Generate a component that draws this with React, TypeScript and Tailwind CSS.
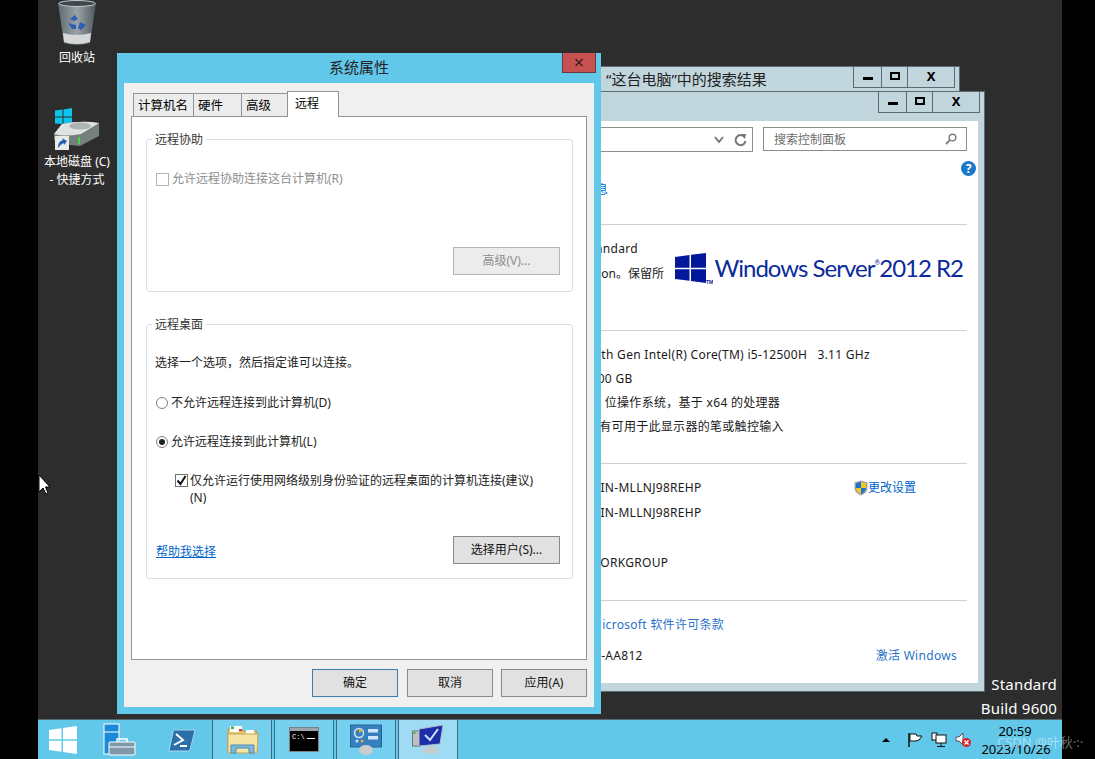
import React from "react";

const font = "font-['Noto_Sans','Noto_Sans_CJK_SC',sans-serif]";

const TabItem = ({ label, active, w }: { label: string; active?: boolean; w: string }) => (
  <div
    className={
      active
        ? `${w} h-[26px] -mb-[1px] z-10 bg-white border border-b-0 border-[#8f9499] pl-[7px] pt-[3px] text-[12px] leading-[18px]`
        : `${w} h-[23px] bg-[#ececec] border border-b-0 border-[#8f9499] -mr-[1px] pl-[4px] pt-[3px] text-[12.500px] leading-[18px]`
    }
  >
    {label}
  </div>
);

const DlgButton = ({ label, w, primary, disabled }: { label: string; w: string; primary?: boolean; disabled?: boolean }) => (
  <div
    className={`${w} h-[28px] flex items-center justify-center text-[12px] border ${
      primary ? "border-[#3c7fb1]" : "border-[#8a8a8a]"
    } ${disabled ? "bg-[#ececec] border-[#b5b5b5] text-[#8d8d8d]" : "bg-[#e1e1e1] text-[#111]"}`}
  >
    {label}
  </div>
);

const Group = ({ title, h, children }: { title: string; h: string; children?: React.ReactNode }) => (
  <div className={`relative ${h} w-[427px] border border-[#d5dfe5] rounded-[3px]`}>
    <span className="absolute left-[5px] -top-[8px] bg-white px-[3px] text-[12px] leading-[16px] text-[#333]">{title}</span>
    {children}
  </div>
);

const Caption = () => (
  <div className="flex h-[21px] border border-t-0 border-[#5c6a72] text-black">
    <div className="w-[28px] flex items-center justify-center border-r border-[#5c6a72]">
      <div className="w-[10px] h-[3px] bg-black mt-[3px]" />
    </div>
    <div className="w-[26px] flex items-center justify-center border-r border-[#5c6a72]">
      <div className="w-[10px] h-[8px] border-2 border-black -mt-[2px]" />
    </div>
    <div className="w-[46px] flex items-center justify-center text-[13px] font-bold leading-none -mt-[1px]">X</div>
  </div>
);

const RecycleBin = () => (
  <svg width="40" height="46" viewBox="0 0 40 46">
    <defs>
      <linearGradient id="bin" x1="0" x2="1">
        <stop offset="0" stopColor="#5f6a70" />
        <stop offset="0.5" stopColor="#9aa4a8" />
        <stop offset="1" stopColor="#4f585c" />
      </linearGradient>
    </defs>
    <path d="M1 3 L39 3 L33 43 Q20 46 7 43 Z" fill="url(#bin)" />
    <ellipse cx="20" cy="3.5" rx="18.5" ry="3" fill="#3f474b" stroke="#c3cace" />
    <path d="M6 33 Q20 37 34 33 L33 42 Q20 46 7 42 Z" fill="#d5d8d9" />
    <path d="M13 19 L18 15 L21 19 L17 21 Z M23 22 L29 25 L24 30 L21 28 Z M11 23 L15 29 L19 29 L19 25 Z" fill="#2d5fb5" />
  </svg>
);

const DriveIcon = () => (
  <svg width="48" height="44" viewBox="0 0 48 44">
    <path d="M2 2.500 L9.500 1.500 V8.500 H2 Z M10.500 1.500 L19 0 V8.500 H10.500 Z M2 9.500 H9.500 V16 L2 15.500 Z M10.500 9.500 H19 V16.500 L10.500 16 Z" fill="#0ec4ee" />
    <path d="M1 26 L9 16 Q28 12 46 15 V28 L27 38 Q10 37 1 32 Z" fill="#74807e" />
    <path d="M1 26 L9 16 Q28 12 46 15 L28 26 Q10 29 1 26 Z" fill="#dfe3e1" />
    <ellipse cx="27" cy="18" rx="11" ry="3.500" fill="#aeb4b2" />
    <rect x="25" y="29" width="2" height="7" fill="#45d44a" />
    <rect x="2" y="28" width="14" height="14" fill="#e9e9e9" />
    <path d="M5 40 Q5 33 10 32 L9 30 L14 33 L11 37 L10.500 35 Q8 36 5 40 Z" fill="#1f5fb0" />
  </svg>
);

const StartLogo = () => (
  <svg width="28" height="28" viewBox="0 0 28 28">
    <path d="M0 4 L12.500 2.200 V13.300 H0 Z M14 2 L28 0 V13.300 H14 Z M0 14.700 H12.500 V25.800 L0 24 Z M14 14.700 H28 V28 L14 26 Z" fill="#fff" />
  </svg>
);

const ServerManagerIcon = () => (
  <svg width="33" height="33" viewBox="0 0 33 33">
    <rect x="1" y="1" width="15" height="30" fill="#1a8ad8" stroke="#fff" />
    <line x1="1" y1="9" x2="16" y2="9" stroke="#fff" />
    <rect x="6" y="19" width="26" height="13" rx="1" fill="#7e98aa" stroke="#fff" />
    <path d="M14 19 V16 H24 V19" fill="none" stroke="#fff" strokeWidth="1.500" />
    <line x1="6" y1="24" x2="32" y2="24" stroke="#fff" />
  </svg>
);

const PowerShellIcon = () => (
  <svg width="28" height="23" viewBox="0 0 28 23">
    <path d="M6 1 H27 L22 21 Q22 22 20 22 H1 L5 3 Q5 1 6 1 Z" fill="#2a6fa8" stroke="#a9d3ea" />
    <path d="M8 5 L15 11 L6 16" fill="none" stroke="#fff" strokeWidth="2" />
    <rect x="12" y="16" width="7" height="2" fill="#fff" />
  </svg>
);

const FolderIcon = () => (
  <svg width="32" height="30" viewBox="0 0 32 30">
    <path d="M1 4 H11 L13 6 H30 V27 H1 Z" fill="#e6c66f" stroke="#b89a4a" />
    <rect x="3" y="1" width="12" height="6" fill="#fff" />
    <rect x="4" y="1.500" width="3" height="2.500" fill="#35b24a" />
    <rect x="12" y="4" width="3" height="2.500" fill="#d8402f" />
    <rect x="19" y="5" width="8" height="4" fill="#fff" />
    <path d="M1 9 H31 L30 28 H1 Z" fill="#f6e4a5" stroke="#c3a552" />
    <path d="M4 28 V20 H27 V28 H22 V23 H9 V28 Z" fill="#7fb8d8" stroke="#4c8cb4" />
  </svg>
);

const CmdIcon = () => (
  <svg width="30" height="25" viewBox="0 0 30 25">
    <rect x="0.500" y="0.500" width="29" height="24" fill="#000" stroke="#7a8288" />
    <rect x="1" y="1" width="28" height="3" fill="#9ea4a8" />
    <text x="3" y="12" fill="#fff" fontSize="7" fontFamily="'Liberation Mono', monospace">C:\</text>
    <rect x="18" y="11" width="8" height="1" fill="#fff" />
  </svg>
);

const ControlPanelIcon = () => (
  <svg width="33" height="32" viewBox="0 0 33 32">
    <rect x="0.500" y="1" width="31" height="22" fill="#3680c0" stroke="#26639b" />
    <circle cx="9" cy="9" r="4.500" fill="none" stroke="#cde7f6" strokeWidth="1.500" />
    <path d="M9 4.500 L13 7 L9 9 Z" fill="#f6a623" />
    <rect x="18" y="5" width="10" height="3.500" fill="#cde7f6" />
    <rect x="18" y="12" width="10" height="3.500" fill="#cde7f6" />
    <circle cx="7" cy="17" r="1.500" fill="#cde7f6" />
    <circle cx="12" cy="17" r="1.500" fill="#f6a623" />
    <ellipse cx="16" cy="26" rx="7" ry="5" fill="#c8cccd" />
  </svg>
);

const SystemIcon = () => (
  <svg width="33" height="29" viewBox="0 0 33 29">
    <rect x="0.500" y="6" width="8" height="15" fill="#bcc0c2" stroke="#6d7376" />
    <rect x="1.500" y="7" width="2" height="2" fill="#4caf50" />
    <path d="M7 4 L31 0 L28 19 L7 21 Z" fill="#1a2fa8" stroke="#b7bcc0" />
    <path d="M13 10 L18 15 L26 4" fill="none" stroke="#cfe1ff" strokeWidth="2" />
    <ellipse cx="19" cy="25" rx="8" ry="3.500" fill="#c9cccd" />
  </svg>
);

const ShieldIcon = () => (
  <svg width="14" height="16" viewBox="0 0 14 16">
    <path d="M7 0.500 L13.500 2.500 V8 Q13.500 13 7 15.500 Q0.500 13 0.500 8 V2.500 Z" fill="#9a9fa3" />
    <path d="M7 2 V8 H2 V3.300 Z" fill="#1d72d0" />
    <path d="M7 2 L12 3.300 V8 H7 Z" fill="#f2c81f" />
    <path d="M2 8 H7 V14 Q3 12.500 2 8 Z" fill="#f2c81f" />
    <path d="M7 8 H12 Q11 12.500 7 14 Z" fill="#1d72d0" />
  </svg>
);

const ServerLogo = () => (
  <div className="flex items-start">
    <svg width="38" height="32" viewBox="0 0 38 32" className="shrink-0">
      <path d="M0 4 L14.500 2 V14.700 H0 Z M16 1.700 L31 0 V14.700 H16 Z M0 16.300 H14.500 V27.700 L0 26 Z M16 16.300 H31 V30 L16 28 Z" fill="#03189a" />
      <text x="31" y="31" fontSize="5" fontWeight="700" fill="#03189a" fontFamily="'Liberation Sans', sans-serif">TM</text>
    </svg>
    <span className="font-['Lato',sans-serif] text-[#0b2a9c] text-[24px] leading-[30px] tracking-[-1px] whitespace-nowrap ml-[1px]">
      Windows Server<sup className="text-[7px] align-super">®</sup>2012 R2
    </span>
  </div>
);

const InfoLine = ({ children, h = "h-[24px]" }: { children: React.ReactNode; h?: string }) => (
  <div className={`${h} flex items-center whitespace-nowrap text-[12px] tracking-[0.3px] text-[#1a1a1a]`}>{children}</div>
);

export default function App() {
  return (
    <div className={`relative w-[1095px] h-[759px] bg-black overflow-hidden ${font}`}>
      <div className="absolute left-[38px] right-[33px] top-0 bottom-0 bg-[#2d2d2d] flex flex-col">
        <div className="flex-1" />
        {/* taskbar */}
        <div className="h-[40px] bg-[#62c8ea] border-t border-[#566a74] flex items-stretch text-black">
          <div className="w-[11px]" />
          <div className="w-[54px] flex items-center"><StartLogo /></div>
          <div className="w-[65px] flex items-center"><ServerManagerIcon /></div>
          <div className="w-[45px] flex items-center pt-[1px]"><PowerShellIcon /></div>
          <div className="ml-[-1px] w-[60px] bg-[#75cfee] border-x border-[#3d6b80] flex items-center justify-center pl-[1px]"><FolderIcon /></div>
          <div className="ml-[2px] w-[60px] bg-[#75cfee] border-x border-[#3d6b80] flex items-center justify-center"><CmdIcon /></div>
          <div className="ml-[2px] w-[60px] bg-[#75cfee] border-x border-[#3d6b80] flex items-center justify-center"><ControlPanelIcon /></div>
          <div className="ml-[2px] w-[60px] bg-[#9fdcf3] border-x border-[#3d6b80] flex items-center justify-center"><SystemIcon /></div>
          <div className="flex-1" />
          <div className="flex items-center gap-[8px] mr-[12px]">
            <div className="w-0 h-0 border-x-[4px] border-x-transparent border-b-[4px] border-b-black mr-[9px]" />
            <svg width="16" height="16" viewBox="0 0 16 16" fill="none" stroke="#111">
              <path d="M2 1 V15" strokeWidth="1.500" />
              <path d="M3 2 H9 L10 4 H15 L12 8 L9 9 H3 Z" fill="#fff" />
            </svg>
            <svg width="16" height="16" viewBox="0 0 16 16" fill="none" stroke="#111">
              <rect x="1" y="1" width="5" height="7" fill="#fff" />
              <rect x="5" y="3" width="10" height="8" fill="#fff" />
              <path d="M10 11 V14 M6 14.500 H14" />
            </svg>
            <svg width="16" height="16" viewBox="0 0 16 16">
              <path d="M1 5 H4 L8 1 V13 L4 9 H1 Z" fill="#fff" stroke="#555" />
              <circle cx="11.500" cy="10.500" r="4.500" fill="#d8242c" />
              <path d="M9.500 8.500 L13.500 12.500 M13.500 8.500 L9.500 12.500" stroke="#fff" strokeWidth="1.500" />
            </svg>
          </div>
          <div className="w-[66px] mr-[13px] flex flex-col items-center justify-center text-[13px] leading-[18px] whitespace-nowrap">
            <span className="-ml-[2px]">20:59</span>
            <span>2023/10/26</span>
          </div>
        </div>
      </div>

      {/* desktop icons */}
      <div className="absolute left-[38px] top-0 w-[78px] flex flex-col items-center text-white text-[12px] leading-[18px] text-center">
        <div className="mt-0"><RecycleBin /></div>
        <span className="mt-[3px]">回收站</span>
        <div className="mt-[41px]"><DriveIcon /></div>
        <span className="mt-[1px] whitespace-nowrap">本地磁盘 (C)</span>
        <span className="whitespace-nowrap">- 快捷方式</span>
      </div>

      {/* watermark edition */}
      <div className="absolute right-[38px] top-[672px] text-right text-white text-[15px] tracking-[0.2px] leading-[24px]">
        <div>Standard</div>
        <div>Build 9600</div>
      </div>

      {/* explorer search window behind */}
      <div className="absolute left-[300px] top-[66px] w-[660px] h-[40px] bg-[#c1d5dc] border border-[#5c6a72] flex justify-between">
        <span className="ml-[305px] mt-[2px] text-[15px] leading-[20px] text-[#222]">“这台电脑”中的搜索结果</span>
        <div className="mr-[4px]"><Caption /></div>
      </div>

      {/* system window */}
      <div className="absolute left-[300px] top-[91px] w-[685px] h-[601px] bg-[#c1d5dc] border border-[#5c6a72] flex flex-col">
        <div className="self-end mr-[4px]"><Caption /></div>
        <div className="flex-1 mx-[6px] mb-[8px] mt-[8px] bg-white flex flex-col pr-[11px] text-[#1a1a1a]">
          <div className="h-[24px] mt-[6px] flex justify-end gap-[10px]">
            <div className="w-[450px] shrink-0 h-[25px] border border-[#8c8c8c] flex items-center justify-end pr-[5px] gap-[10px] text-[#7f7f7f]">
              <svg width="10" height="8" viewBox="0 0 10 8" fill="none" stroke="#777" strokeWidth="2"><path d="M1 1 L5 6 L9 1" /></svg>
              <svg width="13" height="14" viewBox="0 0 13 14" fill="none" stroke="#777" strokeWidth="2">
                <path d="M10.500 4 A5 5 0 1 0 11.500 8" />
                <path d="M7 1 L12 1 L11 6 Z" fill="#777" stroke="none" />
              </svg>
            </div>
            <div className="w-[204px] shrink-0 h-[24px] border border-[#8c8c8c] flex items-center justify-between pl-[10px] pr-[9px] text-[12px] text-[#6d6d6d]">
              <span className="pt-[1px]">搜索控制面板</span>
              <svg width="12" height="12" viewBox="0 0 12 12" fill="none" stroke="#808080">
                <circle cx="7.500" cy="4.500" r="3.300" strokeWidth="1.500" />
                <path d="M5 7 L1 11" strokeWidth="2" />
              </svg>
            </div>
          </div>
          <div className="h-[17px] mt-[10px] flex justify-end -mr-[9px]">
            <div className="w-[15px] h-[15px] rounded-full bg-[#1b79c9] text-white text-[12px] font-bold leading-[15px] text-center">?</div>
          </div>
          <div className="pl-[157px] h-[22px] mt-[1px] text-[12px] leading-[22px] text-[#0066cc] whitespace-nowrap">查看有关计算机的基本信息</div>
          <div className="h-[1px] mt-[23px] bg-[#cfcfcf]" />

          <div className="h-[105px] relative">
            <div className="h-[55px] flex justify-end items-start pt-[28px] pr-[4px] box-content -mb-[28px]">
              <ServerLogo />
            </div>
            <div className="absolute top-[11px] right-[303px] text-right text-[12px] leading-[25px] whitespace-nowrap">
              <div className="pr-[26px] tracking-[0.3px]">Windows Server 2012 R2 Standard</div>
              <div>© 2013 Microsoft Corporation。保留所</div>
            </div>
          </div>
          <div className="h-[1px] bg-[#cfcfcf]" />

          <div className="pl-[280px] pt-[12px] h-[132px]">
            <InfoLine>12th Gen Intel(R) Core(TM) i5-12500H&nbsp;&nbsp;&nbsp;3.11 GHz</InfoLine>
            <InfoLine>8.00 GB</InfoLine>
            <InfoLine>64 位操作系统，基于 x64 的处理器</InfoLine>
            <InfoLine>没有可用于此显示器的笔或触控输入</InfoLine>
          </div>
          <div className="h-[1px] bg-[#cfcfcf]" />

          <div className="pl-[282px] pt-[11px] h-[136px] relative">
            <InfoLine h="h-[25px]">WIN-MLLNJ98REHP</InfoLine>
            <InfoLine h="h-[25px]">WIN-MLLNJ98REHP</InfoLine>
            <InfoLine h="h-[25px]">&nbsp;</InfoLine>
            <InfoLine h="h-[25px]">WORKGROUP</InfoLine>
            <div className="absolute right-[51px] top-[15px] flex items-center text-[12px] text-[#0066cc]">
              <ShieldIcon />
              <span>更改设置</span>
            </div>
          </div>
          <div className="h-[1px] bg-[#cfcfcf]" />

          <div className="pt-[12px] flex flex-col">
            <div className="h-[24px] flex items-center pl-[256px] text-[12px] tracking-[0.3px] text-[#2a72c8] whitespace-nowrap">阅读 Microsoft 软件许可条款</div>
            <div className="h-[38px] flex items-center justify-between pl-[130px] pr-[10px] text-[12px] tracking-[0.3px]">
              <span className="whitespace-nowrap">产品 ID: 00252-00112-26656-AA812</span>
              <span className="text-[#2a72c8] whitespace-nowrap">激活 Windows</span>
            </div>
          </div>
        </div>
      </div>

      {/* system properties dialog */}
      <div className="absolute left-[117px] top-[53px] w-[484px] h-[661px] bg-[#62c8ea] flex flex-col text-black">
        <div className="absolute right-[5px] top-0 w-[34px] h-[20px] bg-[#c75050] border border-[#6b3a3a] border-t-0 flex items-center justify-center">
          <svg width="10" height="9" viewBox="0 0 10 9" fill="none" stroke="#40211f" strokeWidth="1.500"><path d="M1.500 1 L8.500 8 M8.500 1 L1.500 8" /></svg>
        </div>
        <div className="h-[30px] flex items-center justify-center text-[15px] text-[#222] pb-[2px]">系统属性</div>
        <div className="mx-[7px] w-[470px] h-[624px] bg-[#f0f0f0] flex flex-col px-[7px]">
          <div className="h-[33px] flex items-end pl-[2px] relative z-10">
            <TabItem label="计算机名" w="w-[61px]" />
            <TabItem label="硬件" w="w-[49px]" />
            <TabItem label="高级" w="w-[47px]" />
            <TabItem label="远程" w="w-[52px]" active />
          </div>
          <div className="w-[456px] h-[544px] bg-white border border-[#8f9499] pl-[14px] pt-[22px] flex flex-col text-[12px]">
            <Group title="远程协助" h="h-[153px]">
              <label className="absolute left-[9px] top-[31px] flex items-center text-[#8d8d8d] leading-[16px]">
                <span className="w-[13px] h-[13px] border border-[#b4b4b4] bg-white mr-[3px]" />
                允许远程协助连接这台计算机(R)
              </label>
              <div className="absolute right-[12px] bottom-[16px]"><DlgButton label="高级(V)..." w="w-[107px]" disabled /></div>
            </Group>
            <div className="h-[32px]" />
            <Group title="远程桌面" h="h-[255px]">
              <div className="absolute left-[8px] top-[30px] leading-[16px] text-[#222]">选择一个选项，然后指定谁可以连接。</div>
              <label className="absolute left-[9px] top-[70px] flex items-center leading-[16px] text-[#222]">
                <span className="w-[12px] h-[12px] rounded-full border border-[#808080] bg-white mr-[3px]" />
                不允许远程连接到此计算机(D)
              </label>
              <label className="absolute left-[9px] top-[109px] flex items-center leading-[16px] text-[#222]">
                <span className="w-[12px] h-[12px] rounded-full border border-[#808080] bg-white mr-[3px] flex items-center justify-center">
                  <span className="w-[6px] h-[6px] rounded-full bg-[#222]" />
                </span>
                允许远程连接到此计算机(L)
              </label>
              <label className="absolute left-[28px] top-[147px] flex items-start w-[370px] leading-[17px] text-[#222]">
                <span className="shrink-0 w-[13px] h-[13px] border border-[#707070] bg-white mr-[2px] mt-[2px] flex items-center justify-center">
                  <svg width="11" height="11" viewBox="0 0 11 11" fill="none" stroke="#111" strokeWidth="2"><path d="M1.500 5.500 L4.500 9 L9.500 1" /></svg>
                </span>
                <span>仅允许运行使用网络级别身份验证的远程桌面的计算机连接(建议)(N)</span>
              </label>
              <a className="absolute left-[9px] top-[219px] leading-[16px] text-[#0066cc] underline">帮助我选择</a>
              <div className="absolute right-[12px] bottom-[14px]"><DlgButton label="选择用户(S)..." w="w-[107px]" /></div>
            </Group>
          </div>
          <div className="flex justify-end gap-[9px] mt-[9px] w-[456px]">
            <DlgButton label="确定" w="w-[86px]" primary />
            <DlgButton label="取消" w="w-[86px]" />
            <div className="-ml-[1px]"><DlgButton label="应用(A)" w="w-[86px]" /></div>
          </div>
        </div>
      </div>

      {/* mouse pointer */}
      <svg className="absolute left-[38px] top-[474px]" width="13" height="22" viewBox="0 0 13 22">
        <path d="M1 1 V18 L5 14 L8 20 L10 19 L7.500 13 H12 Z" fill="#fff" stroke="#000" />
      </svg>

      {/* csdn overlay */}
      <div className="absolute left-[997px] top-[732px] text-[13px] leading-[20px] text-white/45 whitespace-nowrap">CSDN @叶秋·:·</div>
    </div>
  );
}
